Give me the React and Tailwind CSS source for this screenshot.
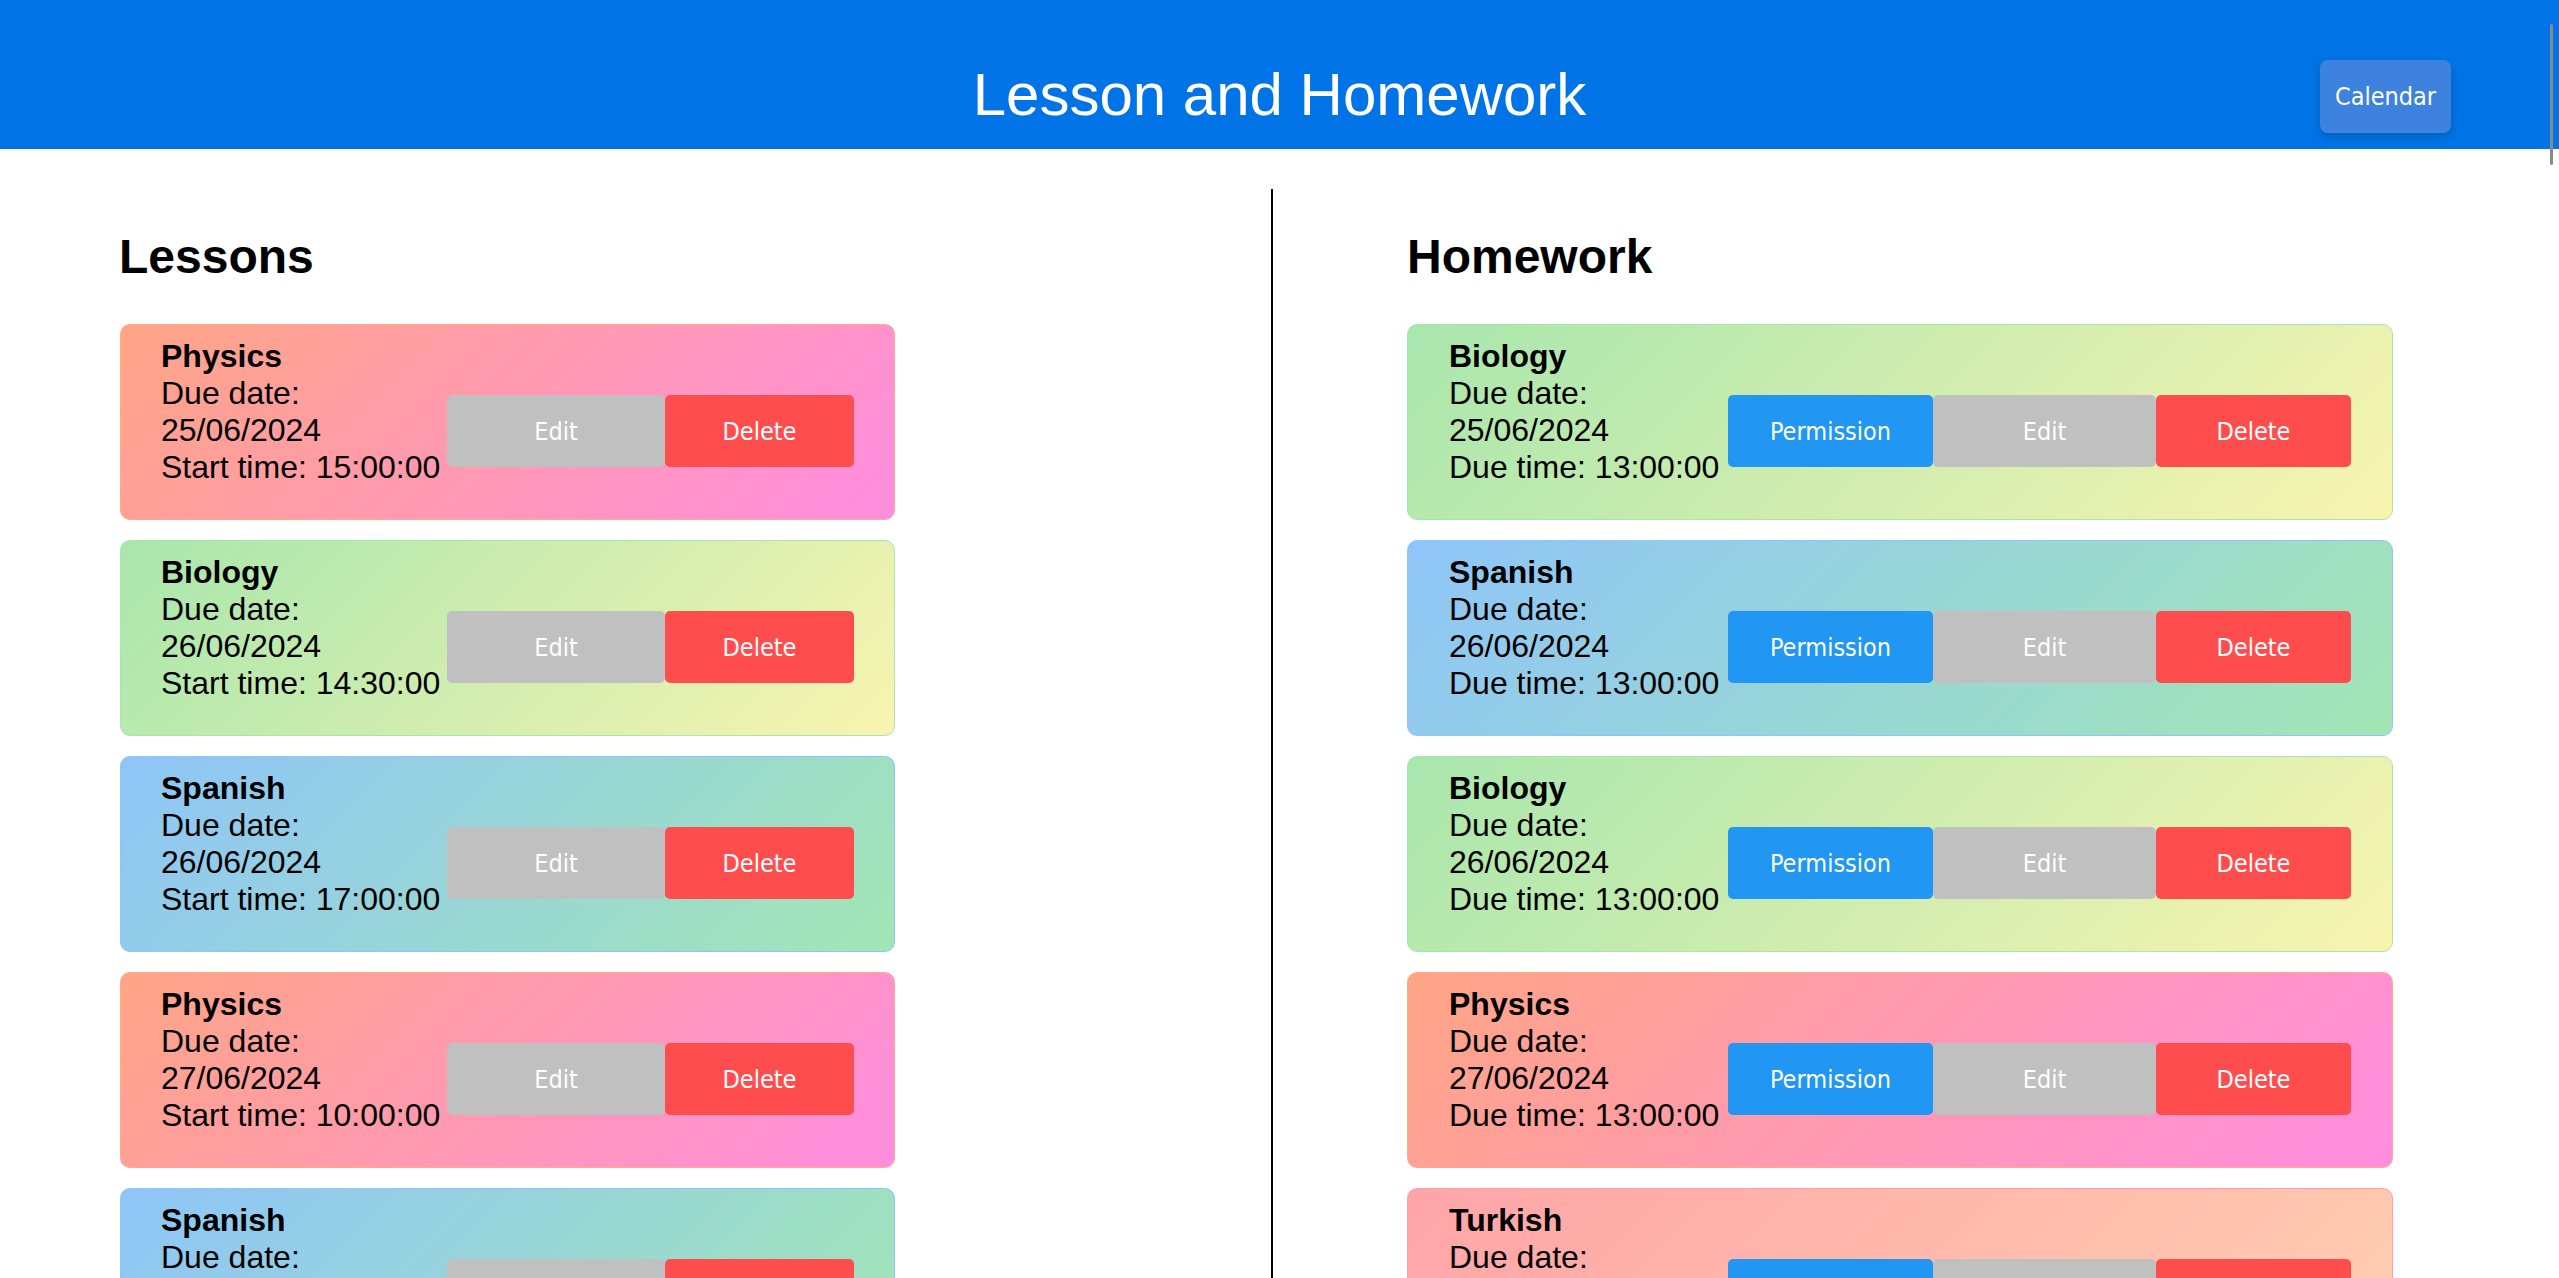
import React from 'react'

const THEMES = {
  Physics: 'border-[#ffa985] bg-[linear-gradient(135deg,#ffa585,#ff8de0)]',
  Biology: 'border-[#a8e6b0] bg-[linear-gradient(135deg,#a8e6ad,#f8f4b0)]',
  Spanish: 'border-[#8ec5fc] bg-[linear-gradient(135deg,#8ec5f8,#a2e6b4)]',
  Turkish: 'border-[#ff9fa8] bg-[linear-gradient(135deg,#ffa4a8,#ffcfb0)]',
}

const lessons = [
  { id: 1, subject: 'Physics', date: '25/06/2024', time: '15:00:00' },
  { id: 2, subject: 'Biology', date: '26/06/2024', time: '14:30:00' },
  { id: 3, subject: 'Spanish', date: '26/06/2024', time: '17:00:00' },
  { id: 4, subject: 'Physics', date: '27/06/2024', time: '10:00:00' },
  { id: 5, subject: 'Spanish', date: '28/06/2024', time: '12:00:00' },
]

const homework = [
  { id: 1, subject: 'Biology', date: '25/06/2024', time: '13:00:00' },
  { id: 2, subject: 'Spanish', date: '26/06/2024', time: '13:00:00' },
  { id: 3, subject: 'Biology', date: '26/06/2024', time: '13:00:00' },
  { id: 4, subject: 'Physics', date: '27/06/2024', time: '13:00:00' },
  { id: 5, subject: 'Turkish', date: '28/06/2024', time: '13:00:00' },
]

const btnFont = { fontFamily: '"DejaVu Sans Condensed", "DejaVu Sans", sans-serif' }

function LessonCard({ item }) {
  return (
    <div className={'box-border flex h-[196px] w-[775px] shrink-0 items-start rounded-[10px] border pl-[40px] pt-[13px] ' + THEMES[item.subject]}>
      <div className="w-[279px] shrink-0 text-[32px] leading-[37px] text-black">
        <div className="font-bold">{item.subject}</div>
        <div>Due date: {item.date}</div>
        <div className="whitespace-nowrap">Start time: {item.time}</div>
      </div>
      <div className="ml-[7px] mt-[57px] flex" style={btnFont}>
        <button type="button" className="h-[72px] w-[218px] rounded-[5px] bg-[#c0c0c0] pt-[2px] text-[25px] text-white">
          Edit
        </button>
        <button type="button" className="h-[72px] w-[189px] rounded-[5px] bg-[#ff4d4d] pt-[2px] text-[25px] text-white">
          Delete
        </button>
      </div>
    </div>
  )
}

function HomeworkCard({ item }) {
  return (
    <div className={'box-border flex h-[196px] w-[986px] shrink-0 items-start rounded-[10px] border pl-[41px] pt-[13px] ' + THEMES[item.subject]}>
      <div className="w-[270px] shrink-0 text-[32px] leading-[37px] text-black">
        <div className="font-bold">{item.subject}</div>
        <div>Due date: {item.date}</div>
        <div className="whitespace-nowrap">Due time: {item.time}</div>
      </div>
      <div className="ml-[9px] mt-[57px] flex" style={btnFont}>
        <button type="button" className="h-[72px] w-[205px] rounded-[5px] bg-[#2196f3] pt-[2px] text-[25px] text-white">
          Permission
        </button>
        <button type="button" className="h-[72px] w-[223px] rounded-[5px] bg-[#c0c0c0] pt-[2px] text-[25px] text-white">
          Edit
        </button>
        <button type="button" className="h-[72px] w-[195px] rounded-[5px] bg-[#ff4d4d] pt-[2px] text-[25px] text-white">
          Delete
        </button>
      </div>
    </div>
  )
}

export default function App() {
  return (
    <div
      className="relative h-screen overflow-hidden bg-white"
      style={{ fontFamily: '"Liberation Sans", Arial, sans-serif' }}
    >
      <header className="grid h-[149px] grid-cols-[1fr_auto_1fr] items-start bg-[#0074e6] pt-[60px]">
        <div />
        <h1 className="text-[60px] leading-[69px] font-normal text-white">Lesson and Homework</h1>
        <button
          type="button"
          className="mr-[108px] h-[73px] w-[131px] justify-self-end rounded-[8px] bg-[#3d82de] text-[25px] text-white shadow-[0_4px_10px_rgba(0,0,0,0.18)]"
          style={btnFont}
        >
          Calendar
        </button>
      </header>

      <main className="mt-[40px] flex">
        <section className="flex w-[1271px] shrink-0 flex-col pl-[120px] pt-[40px]">
          <h2 className="mb-[40px] ml-[-1px] text-[48px] leading-[55px] font-bold text-black">Lessons</h2>
          <div className="flex flex-col gap-[20px]">
            {lessons.map((item) => (
              <LessonCard key={item.id} item={item} />
            ))}
          </div>
        </section>

        <div className="w-[2px] shrink-0 self-stretch bg-black" />

        <section className="flex flex-col pl-[134px] pt-[40px]">
          <h2 className="mb-[40px] text-[48px] leading-[55px] font-bold text-black">Homework</h2>
          <div className="flex flex-col gap-[20px]">
            {homework.map((item) => (
              <HomeworkCard key={item.id} item={item} />
            ))}
          </div>
        </section>
      </main>

      <div className="absolute right-[6px] top-[24px] h-[141px] w-[3px] rounded-full bg-[#8a8a8a]" />
    </div>
  )
}
